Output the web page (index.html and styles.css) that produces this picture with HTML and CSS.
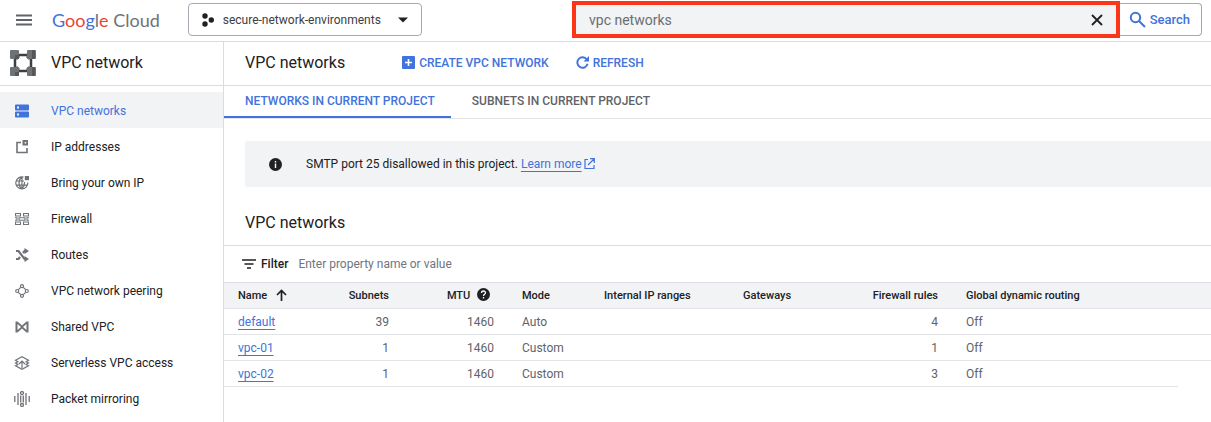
FILE: index.html
```html
<!DOCTYPE html>
<html lang="en">
<head>
<meta charset="utf-8">
<meta name="viewport" content="width=device-width, initial-scale=1">
<title>VPC networks – Google Cloud</title>
<link rel="stylesheet" href="styles.css">
</head>
<body>
<header class="topbar">
  <button class="menu-button" type="button" aria-label="Main menu">
    <svg width="18" height="12" viewBox="0 0 18 12"><path d="M1 1.500h16M1 6h16M1 10.500h16" stroke="#5f6368" stroke-width="2"/></svg>
  </button>
  <a class="logo" href="#"><span class="blue">G</span><span class="red">oo</span><span class="blue">g</span>l<span class="red">e</span> Cloud</a>
  <label class="project">
    <svg width="14" height="14" viewBox="0 0 14 14" fill="#202124"><circle cx="4" cy="3" r="2.700"/><circle cx="4" cy="11" r="2.700"/><circle cx="10.300" cy="7" r="2.700"/></svg>
    <select aria-label="Project"><option>secure-network-environments</option></select>
    <svg width="12" height="6" viewBox="0 0 12 6" fill="#202124"><path d="M1 .5h10L6 5.500z"/></svg>
  </label>
  <form class="search">
    <div class="search-field">
      <input type="text" value="vpc networks" aria-label="Search">
      <button class="clear" type="button" aria-label="Clear search">
        <svg width="12" height="12" viewBox="0 0 12 12"><path d="M1 1l10 10M11 1L1 11" stroke="#202124" stroke-width="1.800"/></svg>
      </button>
    </div>
    <button class="search-button" type="button">
      <svg width="17" height="17" viewBox="0 0 17 17" fill="none" stroke="#4272db" stroke-width="2"><circle cx="6.500" cy="6.500" r="4.700"/><path d="M10 10l6 6"/></svg>
      Search
    </button>
  </form>
</header>
<div class="shell">
  <nav class="sidebar" aria-label="VPC network">
    <div class="product">
      <svg width="26" height="26" viewBox="0 0 26 26"><path d="M8 5h10M8 21h10M5 8v10M21 8v10" fill="none" stroke="#3c4043" stroke-width="2.500"/><path d="M9 6L6 9M17 6l3 3M9 20l-3-3M17 20l3-3" stroke="#5f6368" stroke-width="3"/><rect width="9" height="9" rx="1" fill="#6f7275"/><rect x="17" width="9" height="9" rx="1" fill="#6f7275"/><rect y="17" width="9" height="9" rx="1" fill="#6f7275"/><rect x="17" y="17" width="9" height="9" rx="1" fill="#6f7275"/><path d="M5 5h4v4H5zM22 0h3v9h-3zM5 22h4v4H5zM22 17h3v9h-3z" fill="#55585b"/></svg>
      <span>VPC network</span>
    </div>
    <ul class="nav-list">
      <li><a class="nav-link active" href="#">
        <svg width="14" height="14" viewBox="0 0 14 14" fill="currentColor"><path fill-rule="evenodd" d="M1 .5h12q1 0 1 1v4q0 1-1 1H1q-1 0-1-1v-4q0-1 1-1zM2 2.500v2h2v-2zM1 7.500h12q1 0 1 1v4q0 1-1 1H1q-1 0-1-1v-4q0-1 1-1zM2 9.500v2h2v-2z"/></svg>
        VPC networks</a></li>
      <li><a class="nav-link" href="#">
        <svg width="14" height="14" viewBox="0 0 14 14"><path d="M6 2.500H2v10h10V8" fill="none" stroke="currentColor" stroke-width="1.600"/><path fill-rule="evenodd" d="M7.500 0H13v5.500H7.500zM9.700 2v1.500h1.500V2z" fill="currentColor"/></svg>
        IP addresses</a></li>
      <li><a class="nav-link" href="#">
        <svg width="14" height="14" viewBox="0 0 14 14" fill="none" stroke="currentColor" stroke-width="1.200"><path d="M8.500 1.200A6 6 0 1 0 12.800 6.500M1 5h8M1 9.200h11.200M7 1C3 4 3 10 7 13M7 1v12M9.500 6c.2 3-.5 5-2.500 7"/><path d="M9.800 0H14v4.200H9.800z" fill="currentColor" stroke="none"/></svg>
        Bring your own IP</a></li>
      <li><a class="nav-link" href="#">
        <svg width="14" height="14" viewBox="0 0 14 14" fill="none" stroke="currentColor" stroke-width="1.100"><path d="M.5 1.500h5v2.500h-5zM8.500 1.500h5v2.500h-5zM.5 10h5v2.500h-5zM8.500 10h5v2.500h-5zM4 5.700h6v2.600H4zM0 5.700h2v2.600H0M14 5.700h-2v2.600h2"/></svg>
        Firewall</a></li>
      <li><a class="nav-link" href="#">
        <svg width="14" height="14" viewBox="0 0 14 14" fill="none" stroke="currentColor" stroke-width="2.200"><path d="M1 3h2.500l6 8H11M1 11h2.500L5 9M8 5l1.500-2H11"/><path d="M9.500 0L14 3 9.500 6zM9.500 8l4.500 3-4.500 3z" fill="currentColor" stroke="none"/></svg>
        Routes</a></li>
      <li><a class="nav-link" href="#">
        <svg width="14" height="14" viewBox="0 0 14 14" fill="none" stroke="currentColor" stroke-width="1.200"><path d="M5.700 3.300L3.300 5.700M8.300 3.300l2.400 2.400M3.300 8.300l2.400 2.400M10.700 8.300l-2.400 2.400"/><circle cx="7" cy="2.200" r="1.500"/><circle cx="2.200" cy="7" r="1.500"/><circle cx="11.800" cy="7" r="1.500"/><circle cx="7" cy="11.800" r="1.500"/></svg>
        VPC network peering</a></li>
      <li><a class="nav-link" href="#">
        <svg width="14" height="14" viewBox="0 0 14 14" fill="currentColor"><path fill-rule="evenodd" d="M.5 1.500h2L7 5.500l4.500-4h2v11h-2L7 8.500l-4.500 4h-2zM2.500 4v6L6 7zM11.500 4v6L8 7z"/></svg>
        Shared VPC</a></li>
      <li><a class="nav-link" href="#">
        <svg width="16" height="14" viewBox="0 0 16 14" fill="none" stroke="currentColor" stroke-width="1.200"><path d="M4.500 6L1.500 4.300 8 .8l6.500 3.500-3 1.700M4 5.500L1.500 7l3 1.800M12 5.500L14.500 7l-3 1.800M4 8.500L1.500 9.800 8 13.200l6.500-3.400L12 8.500M8 12V5.500M5 8l3-3 3 3"/></svg>
        Serverless VPC access</a></li>
      <li><a class="nav-link" href="#">
        <svg width="16" height="16" viewBox="0 0 16 16" fill="none" stroke="currentColor" stroke-width="1.300"><circle cx="8" cy="2" r="1.500"/><circle cx="8" cy="14" r="1.500"/><path d="M6.700 4.500v7M9.300 4.500v7M4 2v12M12 2v12M.8 5v6M15.200 5v6"/></svg>
        Packet mirroring</a></li>
    </ul>
  </nav>
  <main class="content">
    <div class="page-head">
      <h1>VPC networks</h1>
      <button class="action" type="button">
        <svg width="13" height="13" viewBox="0 0 13 13"><rect width="13" height="13" rx="1" fill="#4272db"/><path d="M6.500 3v7M3 6.500h7" stroke="#fff" stroke-width="1.600"/></svg>
        CREATE VPC NETWORK
      </button>
      <button class="action refresh" type="button">
        <svg width="13" height="13" viewBox="0 0 13 13"><path d="M10.800 3.500A5.200 5.200 0 1 0 11.600 7.800" fill="none" stroke="#4272db" stroke-width="1.900"/><path d="M13 0v5.500H7.500z" fill="#4272db"/></svg>
        REFRESH
      </button>
    </div>
    <div class="tabs" role="tablist">
      <button class="tab selected" role="tab" aria-selected="true" type="button">NETWORKS IN CURRENT PROJECT</button>
      <button class="tab" role="tab" aria-selected="false" type="button">SUBNETS IN CURRENT PROJECT</button>
    </div>
    <div class="notice">
      <svg width="13" height="13" viewBox="0 0 13 13"><circle cx="6.500" cy="6.500" r="6.500" fill="#202124"/><path d="M6.500 5.500v4.500M6.500 3v1.500" stroke="#fff" stroke-width="1.400"/></svg>
      <p>SMTP port 25 disallowed in this project. <a class="more" href="#">Learn more</a><svg class="external" width="11" height="11" viewBox="0 0 11 11" fill="none" stroke="#4272db" stroke-width="1.200"><path d="M4 1.500H1v9h9V7M6 .7h4.300V5M10 1L4 7"/></svg></p>
    </div>
    <h2>VPC networks</h2>
    <label class="filter">
      <svg width="14" height="10" viewBox="0 0 14 10"><path d="M0 1h14M2.500 5h9M5 9h4" stroke="#202124" stroke-width="1.700"/></svg>
      <span>Filter</span>
      <input type="text" placeholder="Enter property name or value">
    </label>
    <table class="networks">
      <colgroup><col class="c-name"><col class="c-subnets"><col class="c-mtu"><col class="c-mode"><col class="c-ranges"><col class="c-gateways"><col class="c-rules"><col><col class="c-end"></colgroup>
      <thead>
        <tr>
          <th>Name <svg class="sort" width="11" height="12" viewBox="0 0 11 12" fill="none" stroke="#202124" stroke-width="1.700"><path d="M5.500 12V1.500M1 6l4.500-4.500L10 6"/></svg></th>
          <th class="num">Subnets</th>
          <th class="num mtu">MTU <svg class="help" width="13" height="13" viewBox="0 0 13 13"><circle cx="6.500" cy="6.500" r="6.500" fill="#202124"/><path d="M4.500 5c0-2.700 4-2.600 4-.2 0 1.500-2 1.500-2 3.200M6.500 9v1.500" fill="none" stroke="#fff" stroke-width="1.300"/></svg></th>
          <th>Mode</th><th>Internal IP ranges</th><th>Gateways</th><th class="num">Firewall rules</th><th>Global dynamic routing</th><th></th>
        </tr>
      </thead>
      <tbody>
        <tr><td><a href="#">default</a></td><td class="num">39</td><td class="num">1460</td><td>Auto</td><td></td><td></td><td class="num">4</td><td>Off</td><td></td></tr>
        <tr><td><a href="#">vpc-01</a></td><td class="num">1</td><td class="num">1460</td><td>Custom</td><td></td><td></td><td class="num">1</td><td>Off</td><td></td></tr>
        <tr><td><a href="#">vpc-02</a></td><td class="num">1</td><td class="num">1460</td><td>Custom</td><td></td><td></td><td class="num">3</td><td>Off</td><td></td></tr>
      </tbody>
    </table>
  </main>
</div>
</body>
</html>
```
FILE: styles.css
```css
* { box-sizing: border-box; }
body {
  margin: 0;
  background: #fff;
  color: #202124;
  font: 12px/16px Roboto, "Liberation Sans", sans-serif;
}
button, input, select {
  margin: 0;
  padding: 0;
  border: 0;
  background: none;
  color: inherit;
  font: inherit;
}
svg { flex: none; }
a { color: #4272db; }

.topbar {
  display: flex;
  align-items: center;
  height: 42px;
  padding: 0 9px 2px 15px;
  border-bottom: 1px solid #dadce0;
}
.menu-button { display: flex; }
.logo {
  margin-left: 19px;
  color: #6f7377;
  font: 18px/24px Lato, sans-serif;
  text-decoration: none;
  white-space: nowrap;
}
.logo .blue { color: #4272db; }
.logo .red { color: #ea4335; }
.project {
  display: flex;
  align-items: center;
  gap: 8px;
  width: 234px;
  height: 33px;
  margin-left: 28px;
  padding: 0 12px;
  border: 1px solid #a5a8b0;
  border-radius: 4px;
  color: #3c4043;
}
.project select {
  flex: 1;
  min-width: 0;
  appearance: none;
  outline: 0;
}
.search {
  display: flex;
  align-items: center;
  flex: 0 1 630px;
  margin-left: auto;
}
.search-field {
  display: flex;
  align-items: center;
  flex: 1;
  height: 37px;
  padding: 0 13px;
  border: 4px solid #fc3519;
  background: #f1f3f4;
}
.search-field input {
  flex: 1;
  min-width: 0;
  outline: 0;
  color: #6a6e73;
  font-size: 14px;
}
.clear { display: flex; }
.search-button {
  display: flex;
  align-items: center;
  gap: 4px;
  height: 33px;
  padding: 0 11px 0 9px;
  border: 1px solid #a5a8b0;
  border-left: 0;
  border-radius: 0 4px 4px 0;
  color: #4272db;
  font-size: 13px;
  font-weight: 500;
}

.shell {
  display: flex;
  min-height: calc(100vh - 42px);
}
.sidebar {
  flex: 0 0 224px;
  border-right: 1px solid #dadce0;
}
.product {
  display: flex;
  align-items: center;
  gap: 15px;
  height: 44px;
  padding: 0 0 2px 10px;
  border-bottom: 1px solid #dadce0;
  font-size: 16px;
}
.nav-list {
  margin: 0;
  padding: 6px 0 0;
  list-style: none;
}
.nav-link {
  display: grid;
  grid-template-columns: 44px 1fr;
  align-items: center;
  column-gap: 7px;
  height: 36px;
  padding-top: 2px;
  color: #202124;
  text-decoration: none;
}
.nav-link svg {
  justify-self: center;
  color: #6f7377;
}
.nav-link.active {
  background: #f1f3f4;
  color: #4272db;
}
.nav-link.active svg { color: #4272db; }

.content {
  flex: 1;
  min-width: 0;
}
.page-head {
  display: flex;
  align-items: center;
  height: 44px;
  padding: 0 0 2px 21px;
  border-bottom: 1px solid #dadce0;
}
h1, h2 {
  margin: 0;
  font-size: 16px;
  line-height: 24px;
  font-weight: 400;
}
.action {
  display: flex;
  align-items: center;
  gap: 4px;
  margin-left: 57px;
  color: #4272db;
  font-weight: 500;
}
.action.refresh { margin-left: 27px; }
.tabs {
  display: flex;
  height: 33px;
  border-bottom: 1px solid #e4e5e7;
}
.tab {
  height: 32px;
  padding: 0 16px 0 21px;
  border-bottom: 2px solid transparent;
  color: #5f6368;
  font-weight: 500;
}
.tab.selected {
  border-color: #4272db;
  color: #4272db;
}
.notice {
  display: flex;
  align-items: center;
  gap: 24px;
  height: 46px;
  margin: 22px 0 0 21px;
  padding-left: 24px;
  border-radius: 2px 0 0 2px;
  background: #f1f3f4;
}
.notice p { margin: 0; }
.more, .networks a { text-underline-offset: 3px; }
.external {
  margin-left: 2px;
  vertical-align: -1px;
}
h2 {
  padding: 24px 21px 10px;
  border-bottom: 1px solid #dadce0;
}
.filter {
  display: flex;
  align-items: center;
  height: 36px;
  padding-left: 18px;
  font-weight: 500;
}
.filter span { margin: 0 10px 0 5px; }
.filter input {
  flex: 1;
  outline: 0;
  font-weight: 400;
}
.filter input::placeholder {
  color: #70757f;
  opacity: 1;
}

.networks {
  width: 100%;
  table-layout: fixed;
  border-collapse: collapse;
}
.c-name { width: 96px; }
.c-subnets { width: 83px; }
.c-mtu { width: 105px; }
.c-mode { width: 82px; }
.c-ranges { width: 139px; }
.c-gateways { width: 111px; }
.c-rules { width: 112px; }
.c-end { width: 33px; }
.networks th, .networks td {
  height: 26px;
  padding: 0 14px;
  border-bottom: 1px solid #e1e3e6;
  text-align: left;
  white-space: nowrap;
}
.networks th {
  border-top: 1px solid #dadce0;
  background: #f1f3f4;
  font-size: 11px;
  font-weight: 500;
}
.networks td { color: #5f6368; }
.networks .num { text-align: right; }
.networks th.mtu { padding-right: 18px; }
.networks th svg { vertical-align: -2px; }
.sort { margin-left: 6px; }
.help { margin-left: 4px; }
.networks tbody tr:last-child td:last-child { border-bottom: 0; }
```
